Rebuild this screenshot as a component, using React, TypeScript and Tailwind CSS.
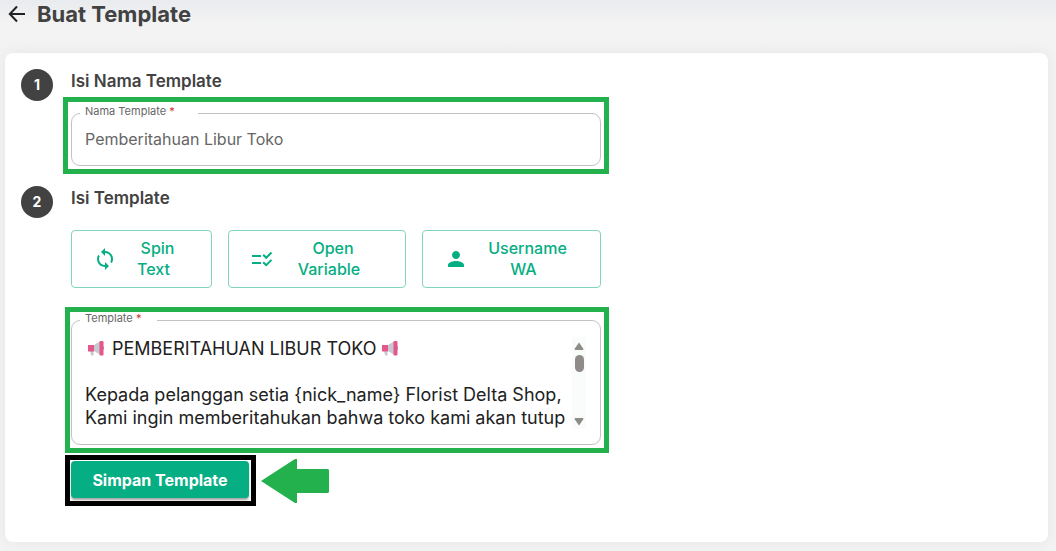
import { useId, useState } from 'react';
import type { ReactNode } from 'react';

// room at the start of the line for the megaphone
const EMOJI_GAP = '\u2003\u2002';

const DEFAULT_TEMPLATE = [
  `${EMOJI_GAP}PEMBERITAHUAN LIBUR TOKO`,
  '',
  'Kepada pelanggan setia {nick_name} Florist Delta Shop,',
  'Kami ingin memberitahukan bahwa toko kami akan tutup',
].join('\n');

function ArrowBackIcon() {
  return (
    <svg viewBox="0 0 18 18" className="size-[18px]" fill="none" stroke="#222" strokeWidth="2" aria-hidden="true">
      <path d="M17 9H2M9 1.5 1.8 9 9 16.5" />
    </svg>
  );
}

function SyncIcon() {
  return (
    <svg viewBox="0 0 24 24" className="size-6" fill="currentColor" aria-hidden="true">
      <path d="M12 4V1L8 5l4 4V6c3.31 0 6 2.69 6 6 0 1.01-.25 1.97-.7 2.8l1.46 1.46C19.54 15.03 20 13.57 20 12c0-4.42-3.58-8-8-8zm0 14c-3.31 0-6-2.69-6-6 0-1.01.25-1.97.7-2.8L5.24 7.74C4.46 8.97 4 10.43 4 12c0 4.42 3.58 8 8 8v3l4-4-4-4v3z" />
    </svg>
  );
}

function RuleIcon() {
  return (
    <svg viewBox="0 0 24 24" className="size-6" fill="none" stroke="currentColor" strokeWidth="2" aria-hidden="true">
      <path d="M2 9h9M2 16h9M13.2 7.8l3 3L21.5 5.5M13.2 15.2l3 3 5.3-5.3" />
    </svg>
  );
}

function PersonIcon() {
  return (
    <svg viewBox="0 0 24 24" className="size-6" fill="currentColor" aria-hidden="true">
      <path d="M12 12c2.21 0 4-1.79 4-4s-1.79-4-4-4-4 1.79-4 4 1.79 4 4 4zm0 2c-2.67 0-8 1.34-8 4v2h16v-2c0-2.66-5.33-4-8-4z" />
    </svg>
  );
}

function Megaphone({ className }: { className: string }) {
  return (
    <svg viewBox="0 0 17 17" className={className} aria-hidden="true">
      <path d="M2 10h3.5v5.5H3z" fill="#c5c9d0" />
      <path d="M6 5l6-3.5v13L6 11z" fill="#c5c9d0" />
      <path d="M0 5h6v6.5H0z" fill="#e5578a" />
      <path d="M14.5 5.5Q17.5 8 14.5 10.5z" fill="#8f949c" />
      <rect x="11.5" y="1" width="4" height="14.5" rx="1.2" fill="#e5578a" />
    </svg>
  );
}

function Step({ number, title, children }: { number: number; title: string; children: ReactNode }) {
  return (
    <section className="flex items-start gap-[18px]">
      <span className="flex size-8 shrink-0 items-center justify-center rounded-full bg-[#424242] text-sm font-bold text-white">
        {number}
      </span>
      <div className="w-full max-w-[530px] min-w-0">
        <h2 className="text-[17px] leading-6 font-semibold text-[#424242]">{title}</h2>
        {children}
      </div>
    </section>
  );
}

interface FieldProps {
  id: string;
  label: string;
  legendClass: string;
  className: string;
  children: ReactNode;
}

function Field({ id, label, legendClass, className, children }: FieldProps) {
  return (
    <fieldset className={`rounded-[9px] border border-[#c2c2c2] ${className}`}>
      <legend className={`ml-2 h-4 px-[5px] text-[11px] leading-3 text-[#666] ${legendClass}`}>
        <label htmlFor={id} className="block">
          {label} <span className="text-[#d32f2f]">*</span>
        </label>
      </legend>
      {children}
    </fieldset>
  );
}

function InsertButton({ icon, first, second }: { icon: ReactNode; first: string; second: string }) {
  return (
    <button
      type="button"
      className="flex h-[58px] items-center rounded-[4px] border border-[#82d6c1] px-[21px] text-base leading-[21px] font-medium text-[#05ae83]"
    >
      {icon}
      <span className="flex-1 text-center">
        <span className="block pl-2">{first}</span>
        <span className="block">{second}</span>
      </span>
    </button>
  );
}

export default function App() {
  const nameId = useId();
  const templateId = useId();
  const [name, setName] = useState('Pemberitahuan Libur Toko');
  const [template, setTemplate] = useState(DEFAULT_TEMPLATE);

  return (
    <div className="min-h-screen bg-[#f3f3f3] bg-linear-to-b from-[#e9ebee] to-[#f3f3f3] to-[24px] pr-2 pb-[9px] pl-[5px] font-['Inter','Liberation_Sans',sans-serif]">
      <header className="flex h-[53px] items-start gap-[11px] pl-[3px]">
        <button type="button" aria-label="Kembali" className="mt-[5px]">
          <ArrowBackIcon />
        </button>
        <h1 className="text-[22px] leading-7 font-bold text-[#424242]">Buat Template</h1>
      </header>

      <main className="flex flex-col gap-3 rounded-lg bg-white px-4 pt-4 pb-9 shadow-[0_0_16px_rgba(0,0,0,0.06)]">
        <Step number={1} title="Isi Nama Template">
          <div className="-mx-2 mt-1 border-5 border-[#22b14c] p-[3px]">
            <Field id={nameId} label="Nama Template" legendClass="w-[118px]" className="h-[61px]">
              <input
                id={nameId}
                type="text"
                required
                value={name}
                onChange={(event) => setName(event.target.value)}
                className="block h-9 w-full px-[13px] text-base text-[#666] outline-none"
              />
            </Field>
          </div>
        </Step>

        <Step number={2} title="Isi Template">
          <div className="mt-5 grid grid-cols-[141fr_178fr_179fr] gap-4">
            <InsertButton icon={<SyncIcon />} first="Spin" second="Text" />
            <InsertButton icon={<RuleIcon />} first="Open" second="Variable" />
            <InsertButton icon={<PersonIcon />} first="Username" second="WA" />
          </div>

          <div className="-mr-2 -ml-[6px] mt-[19px] border-5 border-[#22b14c] pr-[3px] pb-[3px] pl-px">
            <Field id={templateId} label="Template" legendClass="w-[77px]" className="h-[133px]">
              <div className="relative mt-[9px] mr-[14px] ml-[13px] flex h-[92px]">
                <textarea
                  id={templateId}
                  required
                  value={template}
                  onChange={(event) => setTemplate(event.target.value)}
                  className="min-w-0 flex-1 resize-none overflow-hidden text-lg leading-[23px] text-[#212121] outline-none"
                />
                <div className="flex w-[14px] shrink-0 flex-col items-center bg-[#fafcfb] pt-[5px] pb-[3px]" aria-hidden="true">
                  <svg viewBox="0 0 10 8" className="h-2 w-[10px]" fill="#8f8b88">
                    <path d="M5 0.5 9.5 7Q9.5 8 8.5 8h-7Q.5 8 .5 7z" />
                  </svg>
                  <span className="mt-[5px] h-[17px] w-[9px] rounded-full bg-[#8f8b88]" />
                  <svg viewBox="0 0 10 8" className="mt-auto h-2 w-[10px]" fill="#8f8b88">
                    <path d="M5 7.5 9.5 1Q9.5 0 8.5 0h-7Q.5 0 .5 1z" />
                  </svg>
                </div>
                <Megaphone className="absolute top-[3px] left-[3px] size-[17px]" />
                <Megaphone className="absolute top-[3px] left-[297px] size-[17px]" />
              </div>
            </Field>
          </div>

          <div className="-ml-[6px] mt-[2px] flex items-center gap-[5px]">
            <div className="border-5 border-black pt-px pr-[2px] pb-[3px] pl-px">
              <button
                type="button"
                className="h-[37px] w-[178px] rounded-[4px] bg-[#05ae83] text-base font-bold text-white shadow-[0_2px_2px_rgba(0,0,0,0.35)]"
              >
                Simpan Template
              </button>
            </div>
            <svg viewBox="0 0 68 44" className="h-11 w-[68px]" fill="#22b14c" aria-hidden="true">
              <path d="M0 22 34 0h2v10h31l1 1v22l-1 1H36v10h-2z" />
            </svg>
          </div>
        </Step>
      </main>
    </div>
  );
}
